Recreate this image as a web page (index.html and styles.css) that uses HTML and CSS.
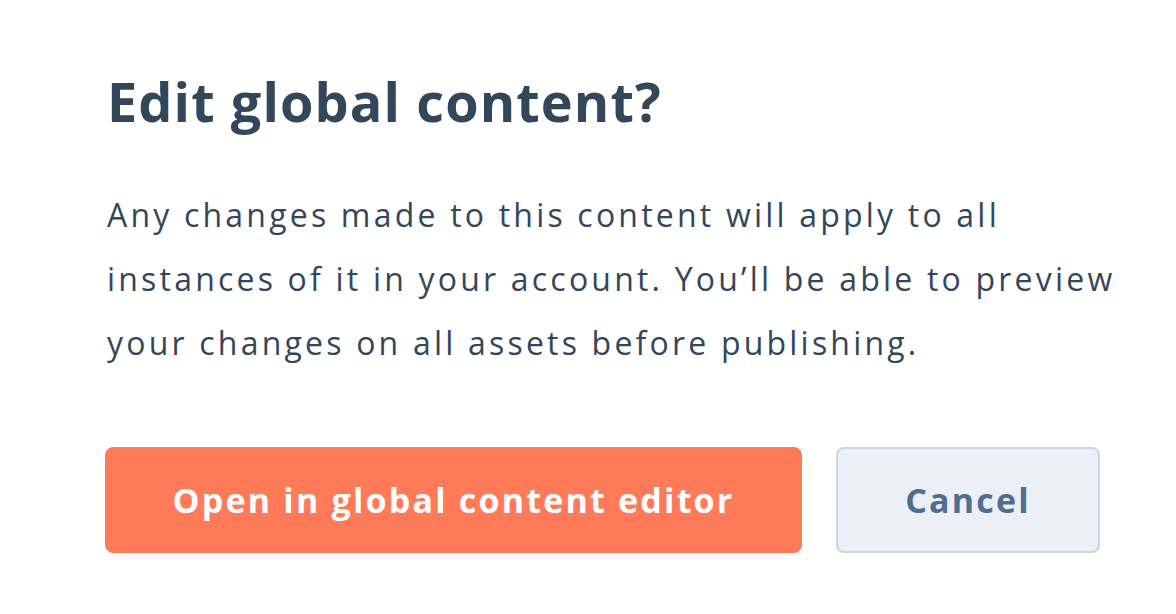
FILE: index.html
```html
<!DOCTYPE html>
<html lang="en">
<head>
<meta charset="utf-8">
<title>Edit global content?</title>
<link rel="stylesheet" href="styles.css">
</head>
<body>
<div class="dialog">
  <h1 class="title">Edit global content?</h1>
  <p class="message">Any changes made to this content will apply to all<br>instances of it in your account. You’ll be able to preview<br>your changes on all assets before publishing.</p>
  <div class="actions">
    <button class="btn btn-primary" type="button">Open in global content editor</button>
    <button class="btn btn-secondary" type="button">Cancel</button>
  </div>
</div>
</body>
</html>
```

FILE: styles.css
```css
html, body {
  margin: 0;
  padding: 0;
  background: #ffffff;
}

body {
  font-family: "Open Sans", "Noto Sans", sans-serif;
  color: #33475b;
}

.dialog {
  padding: 69px 0 0 107px;
  display: flex;
  flex-direction: column;
  align-items: flex-start;
}

.title {
  margin: 0;
  font-size: 54px;
  line-height: 64px;
  font-weight: 700;
  letter-spacing: 1.1px;
  color: #33475b;
}

.message {
  margin: 50px 0 0 0;
  font-size: 32px;
  line-height: 64px;
  font-weight: 400;
  letter-spacing: 3.2px;
  color: #33475b;
}

.actions {
  margin: 72px 0 0 -2px;
  display: flex;
  gap: 34px;
}

.btn {
  font-family: "Open Sans", "Noto Sans", sans-serif;
  font-size: 34px;
  font-weight: 700;
  letter-spacing: 2.2px;
  height: 106px;
  border-radius: 8px;
  display: flex;
  align-items: center;
  justify-content: center;
  cursor: pointer;
  padding: 0;
}

.btn-primary {
  width: 697px;
  background: #ff7a59;
  border: 1px solid #ff7a59;
  color: #ffffff;
}

.btn-secondary {
  width: 264px;
  background: #eaf0f6;
  border: 2px solid #cbd6e2;
  color: #506e91;
}
```
